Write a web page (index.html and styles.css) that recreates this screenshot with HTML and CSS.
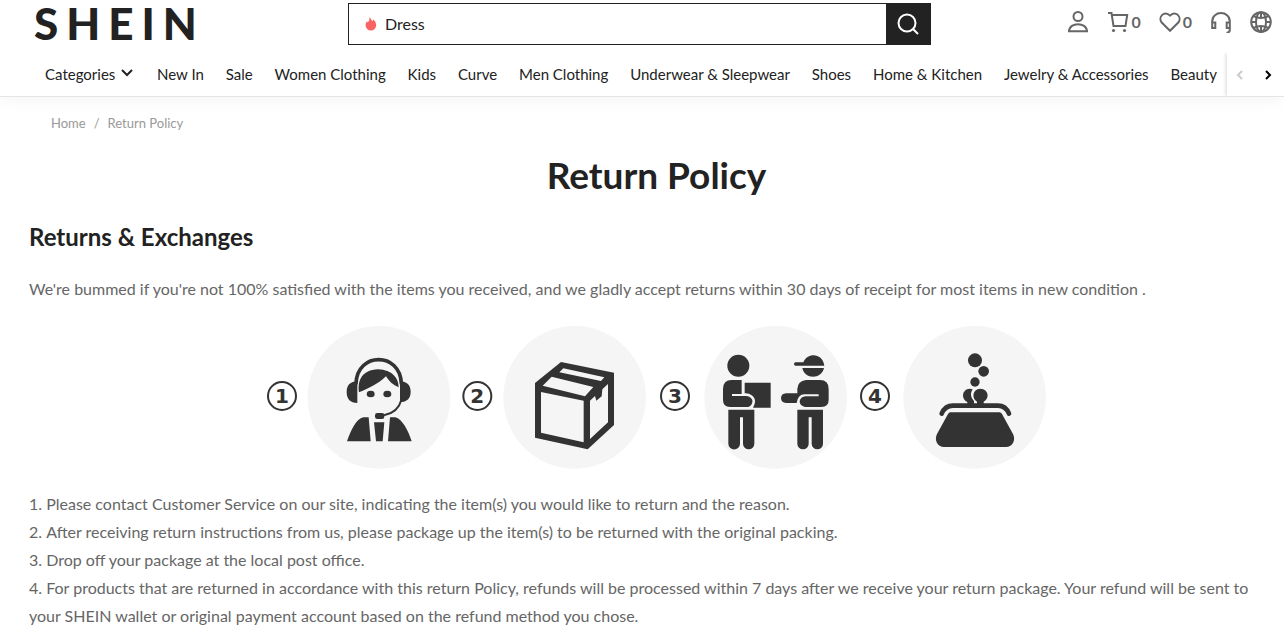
FILE: index.html
```
<!DOCTYPE html>
<html lang="en">

<head>
    <meta charset="UTF-8">
    <meta name="viewport" content="width=device-width, initial-scale=1.0">
    <title>Return Policy | SHEIN</title>
    <link rel="stylesheet" href="styles.css">
</head>

<body>
    <header class="header">
        <div class="header-top">
            <a class="logo" href="#">SHEIN</a>
            <form class="search">
                <svg class="flame" viewBox="0 0 12 14" aria-hidden="true">
                    <path d="M4.500 0C5.500 1.500 6.500 2.500 7 4C7.800 3.800 8.300 3.300 8.500 2.500C10 4 11.200 6 11.200 8.300A5.300 5.300 0 0 1 .6 8.300C.6 6.600 1.200 5.400 2 4.200L2.700 5.600C4 4.500 4.700 2.500 4.500 0Z" />
                </svg>
                <input type="text" name="q" value="Dress" aria-label="Search">
                <button type="submit" aria-label="Search">
                    <svg viewBox="0 0 22 22" aria-hidden="true">
                        <circle cx="10" cy="10" r="8.500" />
                        <path d="M16 16l5 5" />
                    </svg>
                </button>
            </form>
            <div class="tools">
                <a href="#" aria-label="Account">
                    <svg viewBox="0 0 22 22" aria-hidden="true">
                        <circle cx="11" cy="5.500" r="4.500" />
                        <path d="M2 20.200C2.500 10.800 19.500 10.800 20 20.200Z" />
                    </svg>
                </a>
                <a href="#" aria-label="Cart">
                    <svg viewBox="0 0 22 22" aria-hidden="true">
                        <path d="M1 2H4.500L6.500 15H18.500L20.200 4H5" />
                        <circle class="dot" cx="6.500" cy="19.500" r="1.600" />
                        <circle class="dot" cx="17.500" cy="19.500" r="1.600" />
                    </svg>
                    <span>0</span>
                </a>
                <a href="#" aria-label="Wishlist">
                    <svg viewBox="0 0 22 22" aria-hidden="true">
                        <path d="M11 19.800L2.700 11.500C-1.500 6.500 5.500-1.500 11 4.600C16.500-1.500 23.500 6.500 19.300 11.500Z" />
                    </svg>
                    <span>0</span>
                </a>
                <a href="#" aria-label="Support">
                    <svg viewBox="0 0 22 22" aria-hidden="true">
                        <path d="M2.200 17V10.500C2.200-.8 19.800-.8 19.800 10.500V19Q19.800 21.500 16.500 22M2.200 11.500H5.300V17H2.200ZM19.800 11.500H16.700V17H19.800" />
                    </svg>
                </a>
                <a href="#" aria-label="Language">
                    <svg viewBox="0 0 22 22" aria-hidden="true">
                        <circle cx="11" cy="11" r="9.800" />
                        <ellipse cx="11" cy="11" rx="5" ry="9.800" />
                        <path d="M11 1.500V6.500M11 15.500V20.500M1.200 11H6M16 11H20.800M3.500 5Q11 9 18.500 5M3.500 17Q11 13 18.500 17" />
                    </svg>
                </a>
            </div>
        </div>
        <nav class="nav">
            <ul>
                <li><a href="#">Categories
                    <svg viewBox="0 0 12 8" aria-hidden="true"><path d="M1 1l5 5 5-5" /></svg></a></li>
                <li><a href="#">New In</a></li>
                <li><a href="#">Sale</a></li>
                <li><a href="#">Women Clothing</a></li>
                <li><a href="#">Kids</a></li>
                <li><a href="#">Curve</a></li>
                <li><a href="#">Men Clothing</a></li>
                <li><a href="#">Underwear &amp; Sleepwear</a></li>
                <li><a href="#">Shoes</a></li>
                <li><a href="#">Home &amp; Kitchen</a></li>
                <li><a href="#">Jewelry &amp; Accessories</a></li>
                <li><a href="#">Beauty</a></li>
            </ul>
            <div class="nav-arrows">
                <button type="button" aria-label="Previous" disabled>
                    <svg viewBox="0 0 8 12" aria-hidden="true"><path d="M6 2L2 6l4 4" /></svg>
                </button>
                <button type="button" aria-label="Next">
                    <svg viewBox="0 0 8 12" aria-hidden="true"><path d="M2 2l4 4-4 4" /></svg>
                </button>
            </div>
        </nav>
    </header>

    <div class="breadcrumb">
        <a href="#">Home</a>
        <span>/</span>
        <a href="#">Return Policy</a>
    </div>

    <main class="content">
        <h1>Return Policy</h1>
        <h2>Returns &amp; Exchanges</h2>
        <p>We're bummed if you're not 100% satisfied with the items you received, and we gladly accept returns within 30 days of receipt for most items in new condition .</p>

        <svg class="steps" viewBox="0 0 2340 435" role="img" aria-label="The four steps of a return">
            <!-- contact customer service -->
            <g transform="translate(-21 -15)">
                <circle class="ring" cx="66" cy="228" r="42" />
                <text x="66" y="249">1</text>
                <circle class="disc" cx="357" cy="232" r="214" />
                <path class="light" d="M292 215C292 110 420 110 420 215C420 250 400 290 357 296C315 290 292 255 292 215Z" />
                <path class="line" stroke-width="11" d="M288 190C292 95 420 95 424 190" />
                <path d="M292 183V249C271 249 260 237 260 216S271 185 292 183ZM420 183V246C441 246 452 235 452 215S441 185 420 183ZM297 217C292 181 306 150 354 148C398 150 416 175 416 202C399 195 386 183 378 169C354 192 328 204 297 217Z" />
                <ellipse cx="332" cy="222" rx="12" ry="10" />
                <ellipse cx="382" cy="222" rx="12" ry="10" />
                <path class="line" stroke-width="6" d="M424 240Q414 277 374 285" />
                <rect x="345" y="279" width="28" height="18" rx="7" />
                <path d="M261 364C272 332 289 296 310 292H326L332 364ZM342 307H373L368 364H348ZM390 292H406C427 296 446 335 455 364H384Z" />
            </g>
            <!-- pack the items -->
            <g transform="translate(564 -15)">
                <circle class="ring" cx="67" cy="228" r="42" />
                <text x="67" y="249">2</text>
                <circle class="disc" cx="359" cy="232" r="214" />
                <path d="M318 126L477 158V315L398 388L240 353V189Z" />
                <path class="light" d="M325 145L448 172L438 183L313 157ZM290 170L415 201L390 229L263 197ZM258 216L386 242V367L258 338ZM405 242L420 228L424 242L440 229L442 208L459 192V307L405 357Z" />
            </g>
            <!-- drop off the package -->
            <g transform="translate(1149 -15)">
                <circle class="ring" cx="75" cy="228" r="42" />
                <text x="75" y="249">3</text>
                <circle class="disc" cx="377" cy="232" r="214" />
                <circle cx="265" cy="137" r="33" />
                <path d="M275 180H245Q219 180 219 207V240Q219 261 240 261H295Q309 254 307 240Q301 228 287 228H246V222H275ZM284 188H362V263H309Q323 240 305 226Q297 219 284 220ZM235 269H313V371A17 17 0 0 1 279 371V292H270V371A17 17 0 0 1 235 371Z" />
                <path d="M456 137H437A5 5 0 0 1 437 127H460C472 96 518 98 523 137ZM457 144H522C515 179 463 179 457 144Z" />
                <path d="M468 180H510Q536 180 536 207V240Q536 261 514 261H465Q448 256 449 243Q451 231 467 229H506V223H465Q444 222 440 249H408Q393 248 393 234Q394 221 408 220H442V207Q443 183 468 180ZM442 269H519V371A17 17 0 0 1 485 371V292H476V371A17 17 0 0 1 442 371Z" />
            </g>
            <!-- get the refund -->
            <g transform="translate(1749 -15)">
                <circle class="ring" cx="75" cy="228" r="42" />
                <text x="75" y="249">4</text>
                <circle class="disc" cx="374" cy="232" r="214" />
                <circle cx="375" cy="121" r="21" />
                <circle cx="401" cy="154" r="16" />
                <circle cx="375" cy="186" r="14" />
                <path d="M368 208C354 202 339 211 339 227Q340 240 352 246V255H372V243C362 233 360 219 368 208ZM381 245C365 236 366 207 391 206C417 207 419 236 401 245V255H381Z" />
                <path class="line" stroke-width="14" d="M275 281Q285 257 309 257H444Q467 257 477 281" />
                <path d="M301 277H449Q453 277 456 282L489 342C498 360 488 381 468 381H282C262 381 252 360 261 342L294 282Q297 277 301 277Z" />
            </g>
        </svg>

        <ol>
            <li>Please contact Customer Service on our site, indicating the item(s) you would like to return and the reason.</li>
            <li>After receiving return instructions from us, please package up the item(s) to be returned with the original packing.</li>
            <li>Drop off your package at the local post office.</li>
            <li>For products that are returned in accordance with this return Policy, refunds will be processed within 7 days after we receive your return package. Your refund will be sent to your SHEIN wallet or original payment account based on the refund method you chose.</li>
        </ol>
    </main>
</body>

</html>
```
FILE: styles.css
```
* {
    box-sizing: border-box;
}

body {
    margin: 0;
    font-family: Lato, "Liberation Sans", sans-serif;
    color: #222;
    background: #fff;
}

a {
    color: inherit;
    text-decoration: none;
}

button {
    padding: 0;
    border: none;
    background: none;
    cursor: pointer;
}

.header {
    border-bottom: 1px solid #e5e5e5;
    box-shadow: 0 2px 16px rgba(0, 0, 0, 0.05);
}

.header-top {
    display: grid;
    grid-template-columns: 1fr minmax(300px, 583px) 1fr;
    align-items: start;
    padding: 3px 12px 0 7px;
}

.logo {
    padding-left: 27px;
    font-size: 44px;
    font-weight: 900;
    line-height: 40px;
    letter-spacing: 8px;
}

.search {
    display: flex;
    align-items: center;
    height: 42px;
    border: 1px solid #222;
}

.search input {
    flex: 1;
    min-width: 0;
    height: 100%;
    padding: 0 8px 2px;
    border: none;
    outline: none;
    background: none;
    font-family: inherit;
    font-size: 16px;
    color: #222;
}

.search button {
    display: flex;
    align-items: center;
    justify-content: center;
    width: 44px;
    height: 100%;
    background: #222;
}

.search button svg {
    width: 22px;
    height: 22px;
    fill: none;
    stroke: #fff;
    stroke-width: 2;
}

.flame {
    width: 12px;
    height: 14px;
    margin-left: 16px;
    fill: #fa6363;
}

.tools {
    display: flex;
    justify-content: flex-end;
    gap: 18px;
    padding-top: 8px;
}

.tools a {
    display: flex;
    align-items: center;
    gap: 2px;
    font-size: 16px;
    line-height: 22px;
    color: #666;
}

.tools span {
    font-weight: 700;
}

.tools svg {
    width: 22px;
    height: 22px;
    fill: none;
    stroke: #666;
    stroke-width: 2;
}

.tools .dot {
    fill: #666;
    stroke: none;
}

.nav {
    display: flex;
    height: 43px;
    margin-top: 8px;
}

.nav ul {
    display: flex;
    flex: 1;
    align-items: center;
    justify-content: space-between;
    margin: 0;
    padding: 0 10px 2px 45px;
    list-style: none;
    white-space: nowrap;
    font-size: 15px;
}

.nav li svg {
    width: 12px;
    height: 8px;
    margin: 0 2px 3px;
    fill: none;
    stroke: #222;
    stroke-width: 2;
}

.nav-arrows {
    display: flex;
    align-items: center;
    justify-content: space-between;
    width: 57px;
    padding: 0 12px 0 9px;
    box-shadow: -2px 0 3px rgba(0, 0, 0, 0.1);
    clip-path: inset(0 0 0 -6px);
}

.nav-arrows svg {
    display: block;
    width: 8px;
    height: 12px;
    fill: none;
    stroke: #000;
    stroke-width: 2;
}

.nav-arrows button:disabled svg {
    stroke: #ccc;
}

.breadcrumb {
    display: flex;
    gap: 8px;
    padding: 16px 51px 0;
    font-size: 13px;
    line-height: 20px;
    color: #999;
}

.content {
    padding: 18px 0 0 29px;
}

h1 {
    margin: 0;
    font-size: 37px;
    font-weight: 700;
    line-height: 48px;
    text-align: center;
}

h2 {
    margin: 22px 0 0;
    font-size: 24px;
    font-weight: 700;
    line-height: 32px;
}

p,
ol {
    font-size: 16px;
    line-height: 28px;
    color: #666;
}

p {
    margin: 22px 0;
}

.steps {
    display: block;
    width: 780px;
    max-width: 100%;
    margin: 0 auto;
    fill: #333;
}

.steps .disc,
.steps .light {
    fill: #f5f5f5;
}

.steps .ring {
    fill: #fff;
    stroke: #333;
    stroke-width: 6;
}

.steps .line {
    fill: none;
    stroke: #333;
    stroke-linecap: round;
}

.steps text {
    font-family: "DejaVu Sans", sans-serif;
    font-size: 60px;
    font-weight: 700;
    text-anchor: middle;
}

ol {
    margin: 20px 0 0;
    padding: 0 16px 0 0;
    list-style-position: inside;
}
```
